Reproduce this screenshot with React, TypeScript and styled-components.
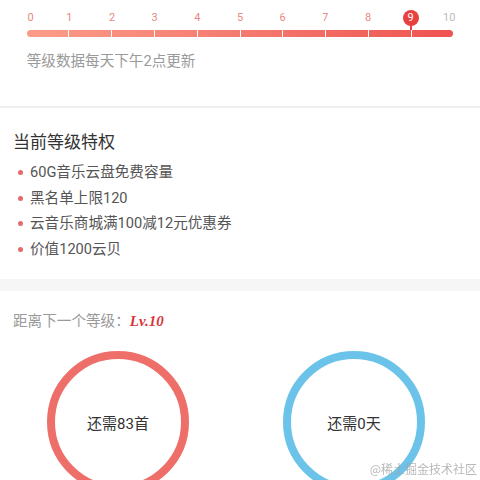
import React from "react";
import styled, { createGlobalStyle } from "styled-components";

const GlobalStyle = createGlobalStyle`
  body {
    margin: 0;
    background: #f6f6f6;
    font-family: Roboto, "Noto Sans CJK SC", sans-serif;
  }
`;

const Page = styled.div`
  width: 480px;
  display: flex;
  flex-direction: column;
`;

const Section = styled.section<{ $gap?: number; $line?: boolean }>`
  background: #fff;
  margin-bottom: ${({ $gap }) => $gap || 0}px;
  border-bottom: ${({ $line }) => ($line ? "2px solid #efefef" : "none")};
`;

const LevelSection = styled(Section)`
  padding: 10px 26.7px 35px;
`;

const LabelRow = styled.div`
  display: grid;
  grid-template-columns: repeat(11, 1fr);
  margin: 0 -21.33px;
  height: 16px;
`;

const Label = styled.span<{ $muted?: boolean; $edge?: "left" | "right" }>`
  font-size: 11px;
  line-height: 16px;
  text-align: center;
  color: ${({ $muted }) => ($muted ? "#bdbdbd" : "#e88782")};
  padding-left: ${({ $edge }) => ($edge === "left" ? 8 : 0)}px;
  padding-right: ${({ $edge }) => ($edge === "right" ? 8 : 0)}px;
  display: flex;
  justify-content: center;
`;

const Marker = styled.span`
  position: relative;
  width: 16px;
  height: 16px;
  border-radius: 50%;
  background: #e8403e;
  color: #fff;
  font-size: 11px;
  line-height: 16px;
  text-align: center;

  &::after {
    content: "";
    position: absolute;
    left: 7px;
    top: 15px;
    width: 2px;
    height: 5px;
    background: #e8403e;
  }
`;

const Bar = styled.div`
  margin-top: 4px;
  height: 7px;
  border-radius: 4px;
  overflow: hidden;
  display: flex;
  background: linear-gradient(90deg, #fb9c88 0%, #f47a70 50%, #ef5350 100%);
`;

const Segment = styled.div`
  flex: 1;
  border-right: 1.5px solid #fff;

  &:last-child {
    border-right: none;
  }
`;

const Note = styled.p`
  margin: 14px 0 0;
  font-size: 14.6px;
  line-height: 20px;
  color: #9a9a9a;
`;

const PrivilegeSection = styled(Section)`
  padding: 22px 13px 17px;
`;

const Title = styled.h2`
  margin: 0 0 6px;
  font-size: 17px;
  font-weight: 400;
  line-height: 24px;
  color: #333;
`;

const List = styled.ul`
  margin: 0;
  padding: 0 0 0 5px;
  list-style: none;
`;

const Item = styled.li`
  display: flex;
  align-items: center;
  gap: 7px;
  font-size: 14.6px;
  line-height: 25.5px;
  color: #555;

  &::before {
    content: "";
    width: 5px;
    height: 5px;
    border-radius: 50%;
    background: #e66a6a;
  }
`;

const NextSection = styled(Section)`
  padding: 20px 0 40px;
`;

const NextTitle = styled.div`
  padding: 0 13px;
  font-size: 14.6px;
  line-height: 20px;
  color: #9a9a9a;
`;

const Lv = styled.span`
  font-family: "Liberation Serif", serif;
  font-style: italic;
  font-weight: 700;
  font-size: 15px;
  color: #d9363b;
`;

const Rings = styled.div`
  margin-top: 20px;
  display: grid;
  grid-template-columns: 1fr 1fr;
  padding-right: 8px;
`;

const Ring = styled.div<{ $color: string }>`
  justify-self: center;
  width: 142px;
  height: 142px;
  box-sizing: border-box;
  border-radius: 50%;
  border: 8px solid ${({ $color }) => $color};
  display: flex;
  align-items: center;
  justify-content: center;
  font-size: 15px;
  color: #333;
`;

const Watermark = styled.div`
  position: fixed;
  right: 3px;
  bottom: 3px;
  font-family: "Noto Sans CJK SC", sans-serif;
  font-size: 12px;
  color: rgba(160, 160, 160, 0.75);
`;

const levels = [0, 1, 2, 3, 4, 5, 6, 7, 8, 9, 10];
const current = 9;

const privileges = [
  "60G音乐云盘免费容量",
  "黑名单上限120",
  "云音乐商城满100减12元优惠券",
  "价值1200云贝",
];

export default function App() {
  return (
    <Page>
      <GlobalStyle />
      <LevelSection $line>
        <LabelRow>
          {levels.map((n) => (
            <Label
              key={n}
              $muted={n > current}
              $edge={n === 0 ? "left" : n === 10 ? "right" : undefined}
            >
              {n === current ? <Marker>{n}</Marker> : n}
            </Label>
          ))}
        </LabelRow>
        <Bar>
          {levels.slice(1).map((n) => (
            <Segment key={n} />
          ))}
        </Bar>
        <Note>等级数据每天下午2点更新</Note>
      </LevelSection>

      <PrivilegeSection $gap={12}>
        <Title>当前等级特权</Title>
        <List>
          {privileges.map((p) => (
            <Item key={p}>{p}</Item>
          ))}
        </List>
      </PrivilegeSection>

      <NextSection>
        <NextTitle>
          距离下一个等级：<Lv>Lv.10</Lv>
        </NextTitle>
        <Rings>
          <Ring $color="#ee6f6a">还需83首</Ring>
          <Ring $color="#6cc3ea">还需0天</Ring>
        </Rings>
      </NextSection>

      <Watermark>@稀土掘金技术社区</Watermark>
    </Page>
  );
}
